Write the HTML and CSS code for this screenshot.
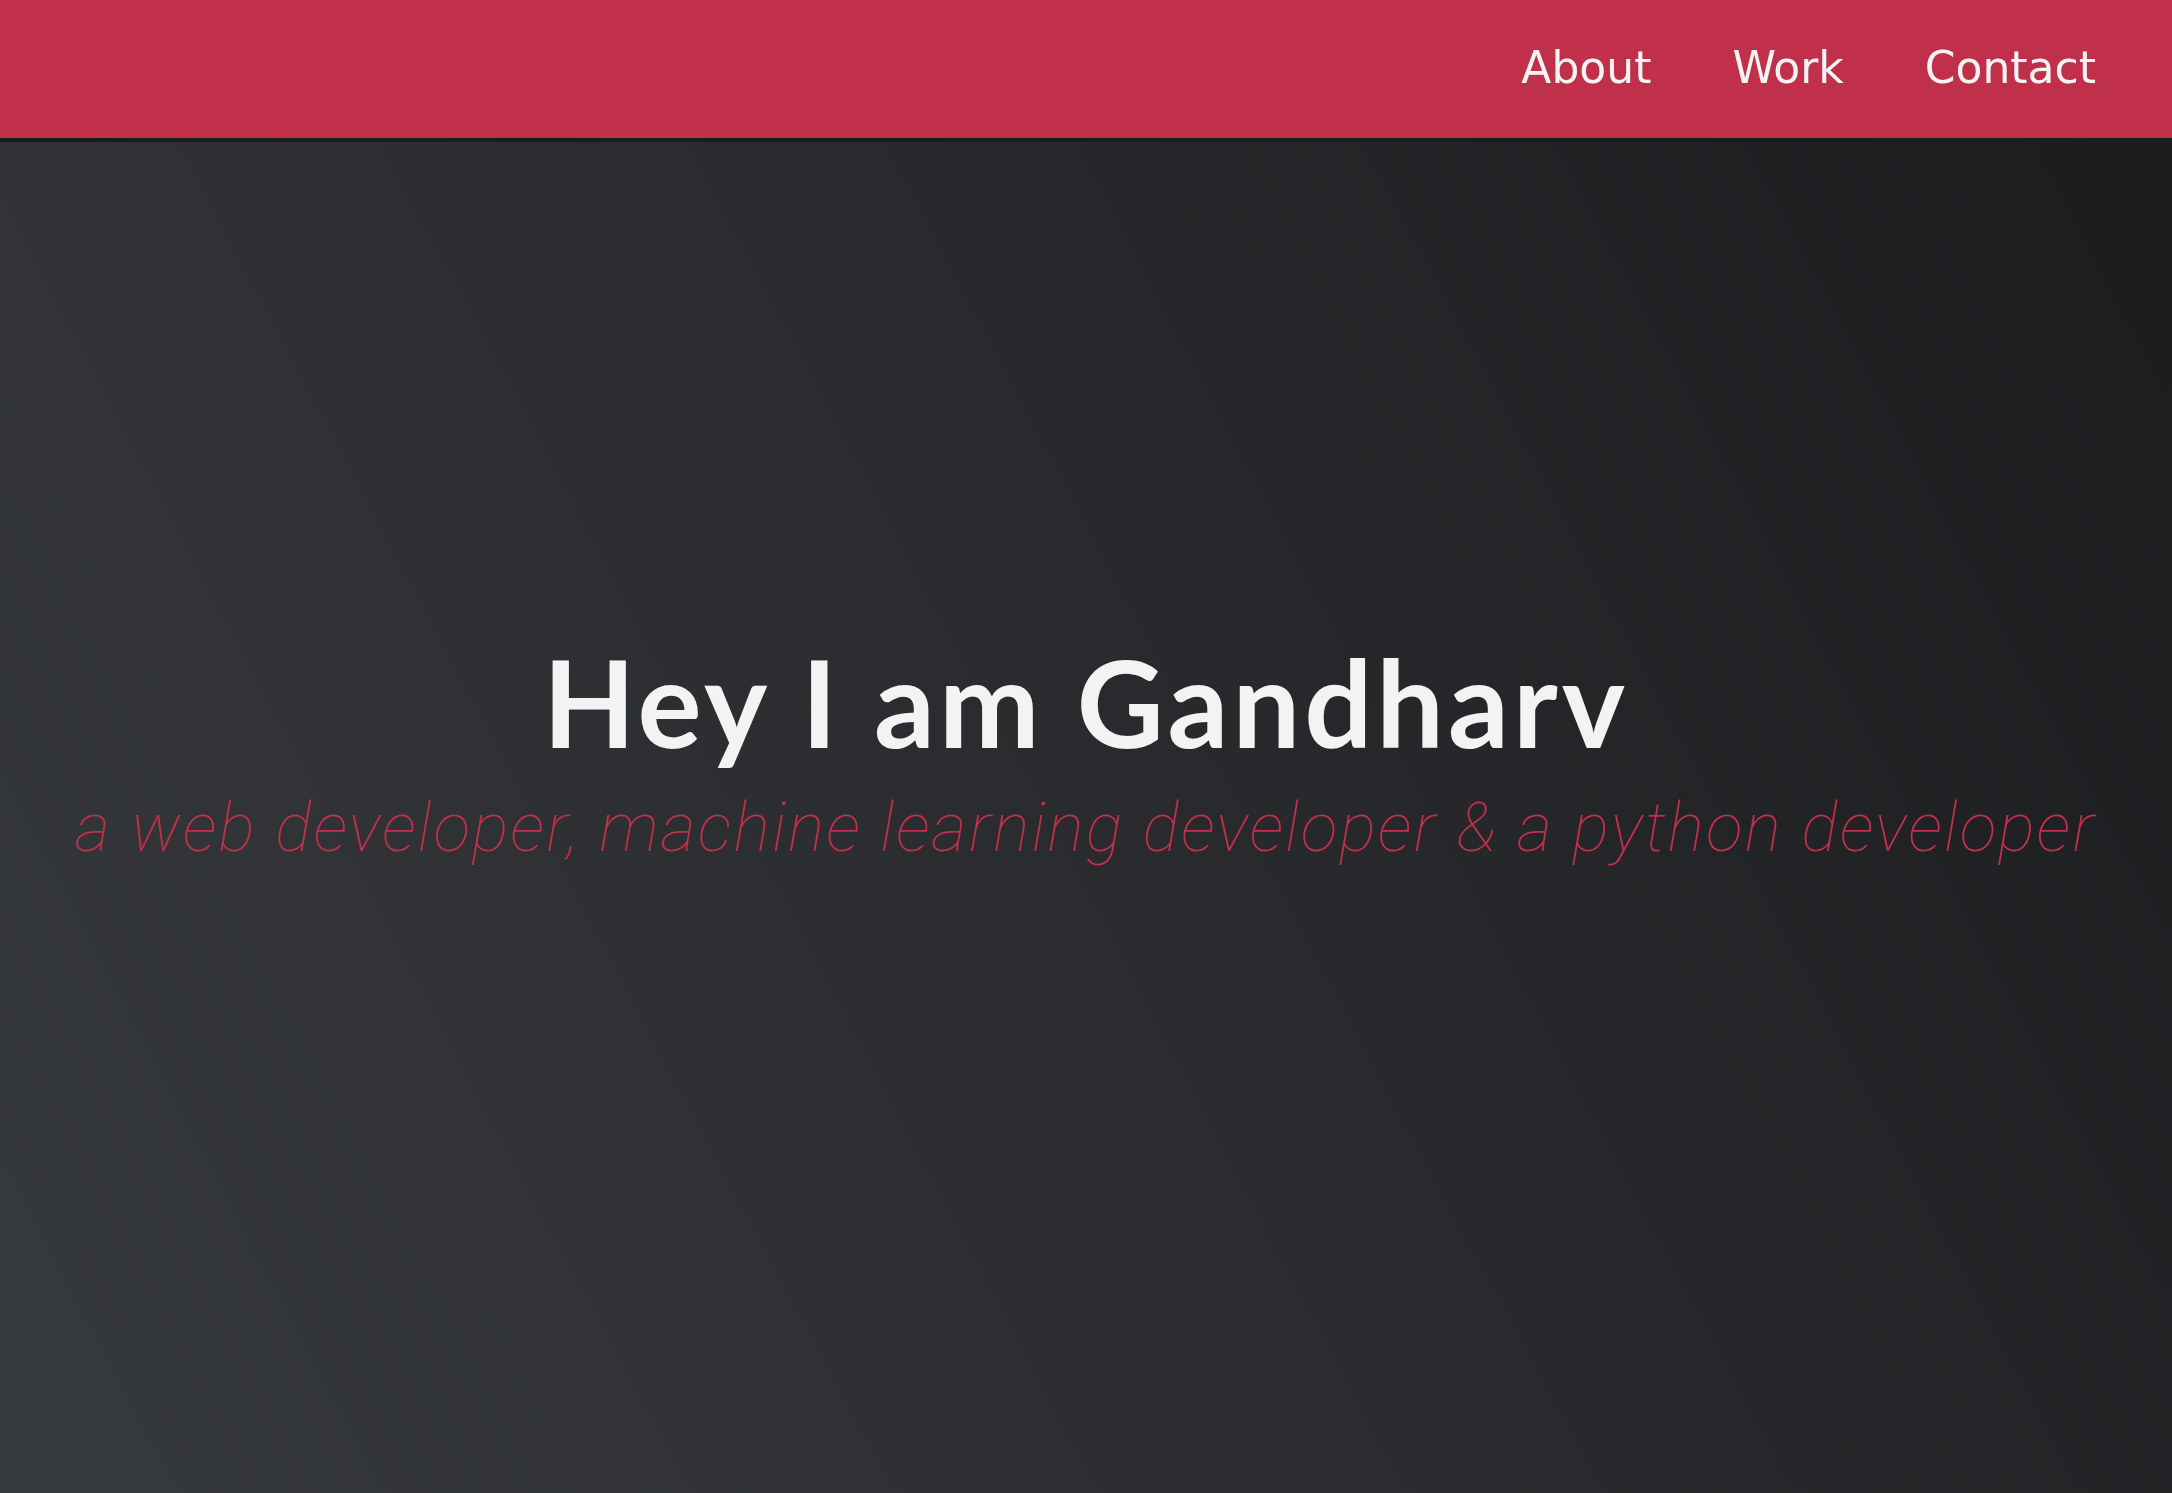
FILE: index.html
```html
<!DOCTYPE html>
<html lang="en">
<head>
<meta charset="utf-8">
<title>Gandharv</title>
<link rel="stylesheet" href="styles.css">
</head>
<body>
<nav class="navbar">
  <ul class="nav-links">
    <li><a href="#about">About</a></li>
    <li><a href="#work">Work</a></li>
    <li><a href="#contact">Contact</a></li>
  </ul>
</nav>
<main class="hero">
  <h1 class="hero-title">Hey I am Gandharv</h1>
  <p class="hero-sub">a web developer, machine learning developer &amp; a python developer</p>
</main>
</body>
</html>
```
FILE: styles.css
```css
html, body {
  margin: 0;
  padding: 0;
}
body {
  background: #1c1d1f;
  font-family: "Lato", "Noto Sans", sans-serif;
}
.navbar {
  position: fixed;
  top: 0;
  left: 0;
  right: 0;
  height: 138px;
  box-sizing: border-box;
  padding-bottom: 4px;
  background: #c0304a;
  box-shadow: 0 4px 0 #1b1c1e;
  display: flex;
  justify-content: flex-end;
  align-items: center;
  z-index: 2;
}
.nav-links {
  list-style: none;
  margin: 0;
  padding: 0 76px 0 0;
  display: flex;
  gap: 81px;
}
.nav-links a {
  color: #f4f4f4;
  text-decoration: none;
  font-family: "DejaVu Sans", sans-serif;
  font-size: 44px;
  font-weight: 400;
}
.hero {
  min-height: 100vh;
  box-sizing: border-box;
  padding-top: 7px;
  display: flex;
  flex-direction: column;
  align-items: center;
  justify-content: center;
  background: linear-gradient(62deg, #373a3d 0%, #1a1b1d 100%);
}
.hero-title {
  margin: 0;
  color: #f3f3f3;
  font-family: "Lato", sans-serif;
  font-weight: 700;
  font-size: 120px;
  letter-spacing: 4px;
  line-height: 1.2;
}
.hero-sub {
  margin: 14px 0 0;
  color: #c4304a;
  font-family: "Roboto", sans-serif;
  font-weight: 100;
  font-style: italic;
  font-size: 68px;
  letter-spacing: 2.3px;
  line-height: 1.2;
}
```
